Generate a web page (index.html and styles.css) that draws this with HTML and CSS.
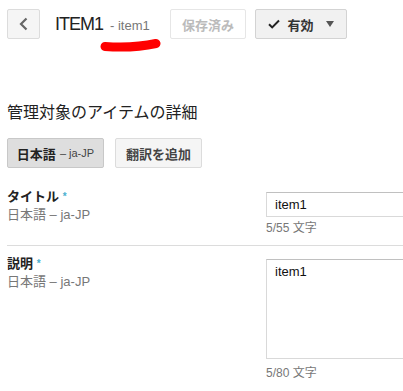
FILE: index.html
```html
<!DOCTYPE html>
<html lang="ja">
<head>
<meta charset="utf-8">
<link rel="stylesheet" href="styles.css">
</head>
<body>
<div class="page">
  <header class="topbar">
    <button class="btn back" aria-label="戻る">
      <svg width="12" height="14" viewBox="0 0 12 14"><path d="M8.5 1.5 L3 7 L8.5 12.5" fill="none" stroke="#666" stroke-width="2.2"/></svg>
    </button>
    <div class="title">
      <span class="name">ITEM1</span><span class="sub">- item1</span>
      <svg class="scribble" width="62" height="16" viewBox="0 0 62 16"><path d="M5 10.5 C 20 11.5, 40 11, 56 7.5" fill="none" stroke="#ff0000" stroke-width="9" stroke-linecap="round"/></svg>
    </div>
    <button class="btn saved">保存済み</button>
    <button class="btn status">
      <svg class="check" width="12" height="10" viewBox="0 0 12 10"><path d="M1 5.2 L4.2 8.4 L11 1.5" fill="none" stroke="#222" stroke-width="2"/></svg>
      <span>有効</span>
      <svg class="caret" width="8" height="6" viewBox="0 0 8 6"><path d="M0 0 H8 L4 6 Z" fill="#555"/></svg>
    </button>
  </header>

  <h2 class="heading">管理対象のアイテムの詳細</h2>

  <div class="langs">
    <button class="btn lang active">日本語<span class="code">– ja-JP</span></button>
    <button class="btn lang plain">翻訳を追加</button>
  </div>

  <div class="field first">
    <div class="label">
      <div class="lname">タイトル <span class="req">*</span></div>
      <div class="lsub">日本語 – ja-JP</div>
    </div>
    <div class="control">
      <div class="input">item1</div>
      <div class="count">5/55 文字</div>
    </div>
  </div>

  <div class="field second">
    <div class="label">
      <div class="lname">説明 <span class="req">*</span></div>
      <div class="lsub">日本語 – ja-JP</div>
    </div>
    <div class="control">
      <div class="input textarea">item1</div>
      <div class="count">5/80 文字</div>
    </div>
  </div>
</div>
</body>
</html>
```

FILE: styles.css
```css
html, body {
  margin: 0;
  padding: 0;
  background: #fff;
  overflow: hidden;
}
body {
  font-family: "Liberation Sans", Arial, "Noto Sans CJK JP", sans-serif;
  color: #222;
}
.page {
  padding: 9px 0 0 7px;
  width: 396px;
  overflow: hidden;
}
.topbar {
  display: flex;
  align-items: center;
  height: 30px;
}
.btn {
  font-family: "Liberation Sans", Arial, "Noto Sans CJK JP", sans-serif;
  box-sizing: border-box;
  flex-shrink: 0;
  white-space: nowrap;
  height: 30px;
  border: 1px solid #dcdcdc;
  border-radius: 2px;
  background: #f5f5f5;
  font-size: 13px;
  font-weight: bold;
  color: #444;
  padding: 0;
  display: inline-flex;
  align-items: center;
  justify-content: center;
  margin: 0;
}
.back {
  width: 33px;
}
.title {
  position: relative;
  margin-left: 15px;
  width: 115px;
  flex-shrink: 0;
  white-space: nowrap;
  display: flex;
  align-items: baseline;
}
.name {
  font-size: 18px;
  letter-spacing: -1px;
  color: #222;
}
.sub {
  font-size: 13px;
  color: #777;
  margin-left: 7px;
}
.scribble {
  position: absolute;
  left: 45px;
  top: 22px;
}
.saved {
  width: 76px;
  background: #fff;
  border-color: #e6e6e6;
  color: #bbb;
}
.status {
  width: 92px;
  margin-left: 9px;
  background: #f1f1f1;
  border-color: #d3d3d3;
  color: #333;
  gap: 7px;
}
.status .caret {
  margin-left: 5px;
}
.heading {
  margin: 61px 0 0 0;
  font-size: 16px;
  font-weight: normal;
  line-height: 22px;
  color: #222;
  font-family: "Noto Sans CJK JP", sans-serif;
}
.langs {
  display: flex;
  gap: 11px;
  margin-top: 16px;
}
.lang.active {
  width: 97px;
  background: #dedede;
  border-color: #c8c8c8;
  color: #222;
}
.lang .code {
  font-size: 11px;
  font-weight: normal;
  color: #444;
  margin-left: 4px;
}
.lang.plain {
  width: 87px;
}
.field {
  display: flex;
}
.field.first {
  margin-top: 17px;
  padding-top: 4px;
  padding-bottom: 10px;
  border-bottom: 1px solid #dcdcdc;
}
.field.second {
  padding-top: 10px;
}
.label {
  width: 259px;
  flex-shrink: 0;
}
.lname {
  font-size: 13px;
  font-weight: bold;
  color: #222;
  line-height: 16px;
}
.req {
  color: #4ab0d0;
  font-size: 10px;
  vertical-align: top;
}
.lsub {
  font-size: 13px;
  color: #777;
  line-height: 16px;
  margin-top: 2px;
}
.control {
  width: 300px;
  flex-shrink: 0;
  padding-top: 3px;
}
.input {
  box-sizing: border-box;
  height: 25px;
  border: 1px solid #d9d9d9;
  border-top-color: #c0c0c0;
  font-size: 13px;
  color: #111;
  padding: 5px 8px;
  line-height: 14px;
}
.textarea {
  height: 100px;
}
.count {
  font-size: 12px;
  color: #777;
  line-height: 14px;
  margin-top: 4px;
}
.field.second .count {
  margin-top: 7px;
}
```
